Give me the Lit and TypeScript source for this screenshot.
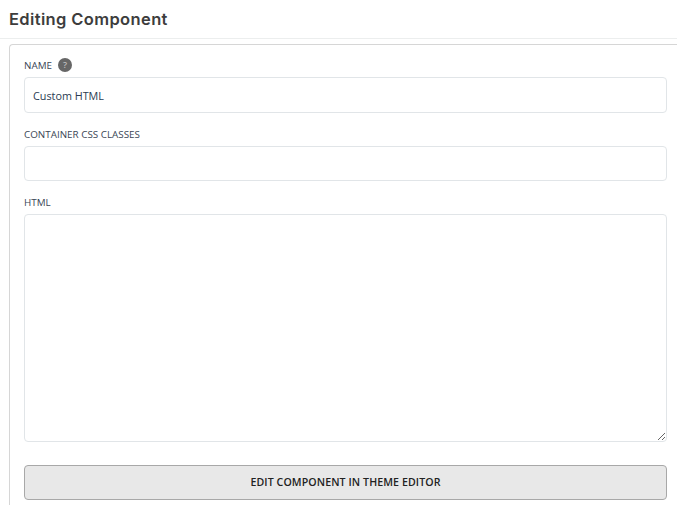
import { LitElement, html, css } from "lit";
import { customElement } from "lit/decorators.js";

@customElement("app-root")
export class AppRoot extends LitElement {
  static styles = css`
    :host {
      display: block;
      width: 677px;
      height: 505px;
      overflow: hidden;
      background: #fff;
      font-family: "Open Sans", sans-serif;
      color: #2c3644;
    }
    .header {
      height: 39px;
      box-sizing: border-box;
      padding: 9px 0 0 9px;
      border-bottom: 1px solid #eceeee;
      font-family: Inter, sans-serif;
      font-weight: 600;
      font-size: 16.5px;
      letter-spacing: 0.37px;
      line-height: 20px;
      color: #3d3d3d;
    }
    .panel {
      box-sizing: border-box;
      margin: 5px 0 0 9px;
      height: 470px;
      border: 1px solid #d6d6d6;
      border-right: none;
      border-bottom: none;
      border-top-left-radius: 4px;
      padding: 12px 10px 0 14px;
      display: flex;
      flex-direction: column;
    }
    .label {
      display: flex;
      align-items: center;
      gap: 6px;
      height: 16px;
      font-size: 9.85px;
      line-height: 16px;
      color: #3a4655;
    }
    .help {
      width: 14px;
      height: 14px;
      margin-top: -1px;
      border-radius: 50%;
      background: #666;
      color: #bbb;
      font-size: 9px;
      line-height: 14px;
      text-align: center;
      font-weight: 600;
    }
    input,
    textarea {
      display: block;
      width: 100%;
      box-sizing: border-box;
      margin: 0;
      border: 1px solid #e1e5e8;
      border-radius: 4px;
      background: #fff;
      font-family: inherit;
      font-size: 10.8px;
      color: #2a3b52;
      outline: none;
    }
    input {
      padding: 0 8px;
    }
    .in1 {
      height: 36px;
      margin-top: 4px;
    }
    .l2 {
      margin-top: 13px;
    }
    .in2 {
      height: 35px;
      margin-top: 4px;
    }
    .l3 {
      margin-top: 13px;
    }
    textarea {
      height: 228px;
      margin-top: 4px;
      resize: vertical;
    }
    button {
      display: block;
      width: 100%;
      height: 35px;
      margin-top: 23px;
      box-sizing: border-box;
      border: 1px solid #a8a8a8;
      border-radius: 4px;
      background: #e8e8e8;
      font-family: inherit;
      font-size: 10.6px;
      font-weight: 600;
      letter-spacing: 0.1px;
      color: #222;
      padding: 0 0 1px;
    }
  `;

  render() {
    return html`
      <div class="header">Editing Component</div>
      <div class="panel">
        <div class="label">NAME <span class="help">?</span></div>
        <input class="in1" type="text" .value=${"Custom HTML"} />
        <div class="label l2">CONTAINER CSS CLASSES</div>
        <input class="in2" type="text" />
        <div class="label l3">HTML</div>
        <textarea></textarea>
        <button>EDIT COMPONENT IN THEME EDITOR</button>
      </div>
    `;
  }
}
